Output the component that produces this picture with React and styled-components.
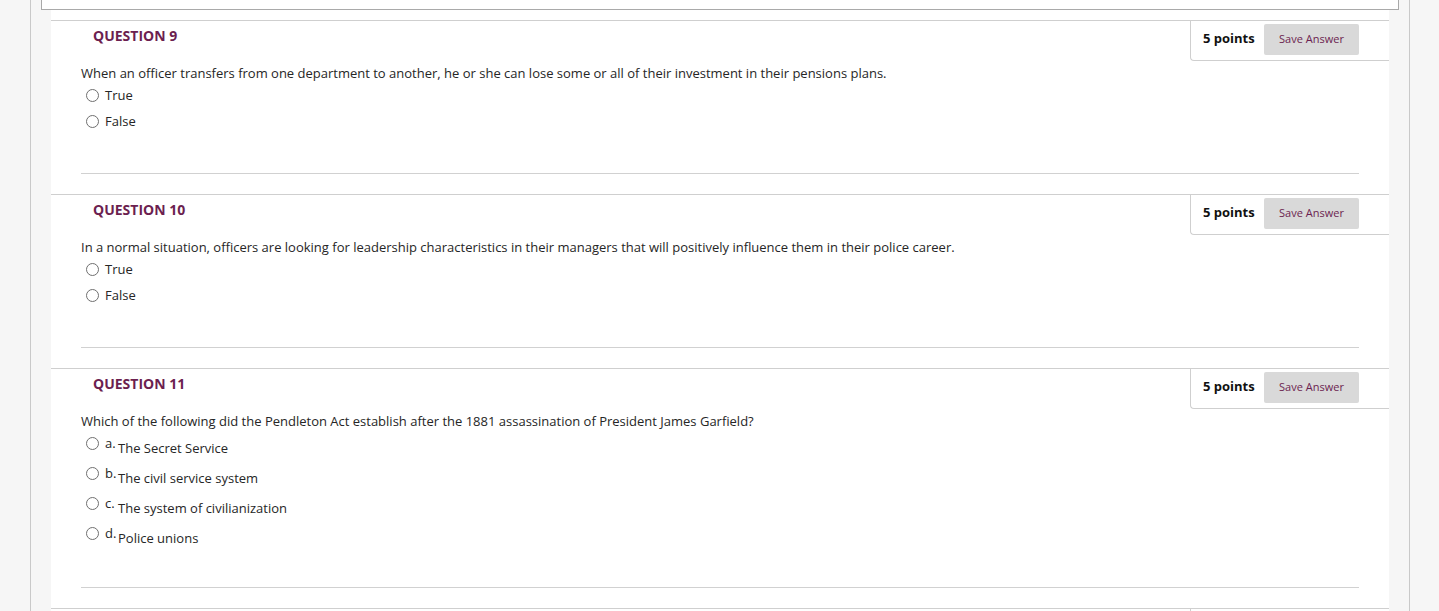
import React from 'react'
import styled, { createGlobalStyle } from 'styled-components'

const GlobalStyle = createGlobalStyle`
  html, body {
    margin: 0;
    padding: 0;
    background: #f6f6f6;
  }
  body {
    font-family: "Open Sans", "Noto Sans", "Liberation Sans", sans-serif;
    color: #262626;
    overflow: hidden;
  }
`

const Page = styled.div`
  height: 611px;
  overflow: hidden;
  padding-left: 30px;
  box-sizing: border-box;
`

const Container = styled.div`
  width: 1378px;
  min-height: 100%;
  border-left: 1px solid #c9c9c9;
  border-right: 1px solid #c9c9c9;
  background: #f6f6f6;
`

const PrevBox = styled.div`
  height: 9px;
  margin: 0 10px;
  background: #fff;
  border: 1px solid #a9a9a9;
  border-top: none;
`

const List = styled.div`
  margin: 0 20px;
  padding-top: 10px;
  background: #fff;
`

const Block = styled.div`
  border-top: 1px solid #cfcfcf;
  padding-bottom: 20px;
`

const Header = styled.div`
  display: flex;
  justify-content: space-between;
  align-items: flex-start;
`

const Title = styled.h3`
  margin: 6px 0 0 42px;
  font-size: 14px;
  line-height: 18px;
  font-weight: 700;
  color: #6c1f50;
`

const PointsBox = styled.div`
  display: flex;
  align-items: center;
  gap: 10px;
  padding: 3px 30px 5px 12px;
  border-left: 1px solid #cfcfcf;
  border-bottom: 1px solid #cfcfcf;
  border-bottom-left-radius: 4px;
`

const Points = styled.span`
  font-size: 13px;
  font-weight: 700;
  color: #111;
  width: 51px;
  margin-bottom: 3px;
  white-space: nowrap;
`

const SaveButton = styled.button`
  width: 95px;
  height: 31px;
  border: none;
  border-radius: 2px;
  background: #d9d9d9;
  color: #6c1f50;
  font-family: inherit;
  font-size: 11px;
  padding: 0 0 2px;
  cursor: pointer;
`

const QuestionText = styled.p`
  margin: 3px 30px 0;
  font-size: 13px;
  line-height: 18px;
`

const Options = styled.div`
  display: flex;
  flex-direction: column;
  padding-left: 35px;
  margin-top: ${(props) => (props.lettered ? '-2px' : '0')};
`

const Option = styled.label`
  display: flex;
  align-items: center;
  height: ${(props) => (props.lettered ? '30px' : '26px')};
  font-size: 13px;
`

const Radio = styled.input.attrs({ type: 'radio' })`
  appearance: none;
  margin: 0 6px 0 0;
  width: 13px;
  height: 13px;
  border: 1px solid #6f6f6f;
  border-radius: 50%;
  background: #fff;
  box-sizing: border-box;
  flex: none;
`

const Letter = styled.span`
  min-width: 13px;
`

const AnswerText = styled.span`
  margin-top: 9px;
`

const Divider = styled.div`
  height: 1px;
  margin: 39px 30px 0;
  background: #d1d1d1;
`

const questions = [
  {
    num: 9,
    text: 'When an officer transfers from one department to another, he or she can lose some or all of their investment in their pensions plans.',
    options: ['True', 'False'],
  },
  {
    num: 10,
    text: 'In a normal situation, officers are looking for leadership characteristics in their managers that will positively influence them in their police career.',
    options: ['True', 'False'],
  },
  {
    num: 11,
    text: 'Which of the following did the Pendleton Act establish after the 1881 assassination of President James Garfield?',
    lettered: true,
    options: ['The Secret Service', 'The civil service system', 'The system of civilianization', 'Police unions'],
  },
]

function QuestionHeader({ num }) {
  return (
    <Header>
      <Title>QUESTION {num}</Title>
      <PointsBox>
        <Points>5 points</Points>
        <SaveButton>Save Answer</SaveButton>
      </PointsBox>
    </Header>
  )
}

function Question({ q }) {
  return (
    <Block>
      <QuestionHeader num={q.num} />
      <QuestionText>{q.text}</QuestionText>
      <Options lettered={q.lettered}>
        {q.options.map((opt, i) => (
          <Option key={opt} lettered={q.lettered}>
            <Radio name={'q' + q.num} />
            {q.lettered ? (
              <>
                <Letter>{'abcd'[i]}.</Letter>
                <AnswerText>{opt}</AnswerText>
              </>
            ) : (
              opt
            )}
          </Option>
        ))}
      </Options>
      <Divider />
    </Block>
  )
}

export default function App() {
  return (
    <>
      <GlobalStyle />
      <Page>
        <Container>
          <PrevBox />
          <List>
            {questions.map((q) => (
              <Question key={q.num} q={q} />
            ))}
            <Block>
              <QuestionHeader num={12} />
            </Block>
          </List>
        </Container>
      </Page>
    </>
  )
}
